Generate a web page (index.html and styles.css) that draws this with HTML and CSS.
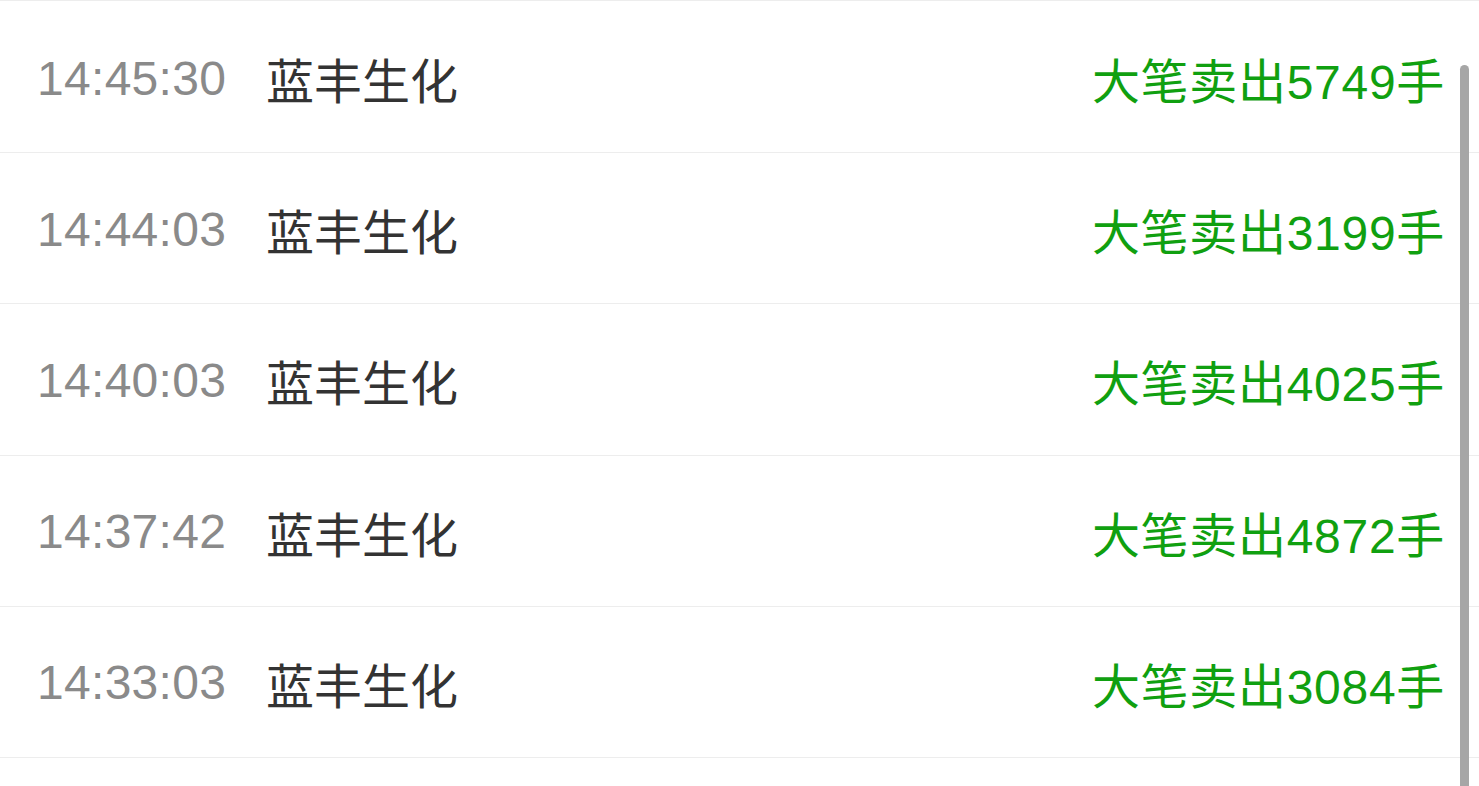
FILE: index.html
```html
<!DOCTYPE html>
<html lang="zh-CN">
<head>
<meta charset="utf-8">
<title>大笔卖出</title>
<link rel="stylesheet" href="styles.css">
</head>
<body>
<div class="list">
  <div class="row"><span class="time">14:45:30</span><span class="name">蓝丰生化</span><span class="deal">大笔卖出5749手</span></div>
  <div class="row"><span class="time">14:44:03</span><span class="name">蓝丰生化</span><span class="deal">大笔卖出3199手</span></div>
  <div class="row"><span class="time">14:40:03</span><span class="name">蓝丰生化</span><span class="deal">大笔卖出4025手</span></div>
  <div class="row"><span class="time">14:37:42</span><span class="name">蓝丰生化</span><span class="deal">大笔卖出4872手</span></div>
  <div class="row"><span class="time">14:33:03</span><span class="name">蓝丰生化</span><span class="deal">大笔卖出3084手</span></div>
</div>
<div class="scrollbar"></div>
</body>
</html>
```
FILE: styles.css
```css
html, body {
  margin: 0;
  padding: 0;
  background: #ffffff;
  height: 786px;
  overflow: hidden;
}
body {
  font-family: "Liberation Sans", "Noto Sans CJK SC", sans-serif;
  position: relative;
}
.list {
  padding-top: 1px;
  border-top: 1px solid #ededed;
}
.row {
  display: flex;
  align-items: center;
  height: 151.2px;
  box-sizing: border-box;
  border-bottom: 1px solid #ededed;
  padding: 2px 35px 0 37px;
  font-size: 48px;
}
.time {
  color: #8a8a8a;
  width: 229px;
  letter-spacing: 0.3px;
}
.name {
  color: #333333;
  font-family: "Noto Sans CJK SC", sans-serif;
  font-size: 48px;
}
.deal {
  margin-left: auto;
  color: #10a010;
  font-size: 48px;
  letter-spacing: 0.7px;
  margin-right: -1px;
}
.scrollbar {
  position: absolute;
  left: 1460px;
  top: 65px;
  width: 9px;
  height: 740px;
  border-radius: 5px;
  background: #a6a6a6;
}
```
